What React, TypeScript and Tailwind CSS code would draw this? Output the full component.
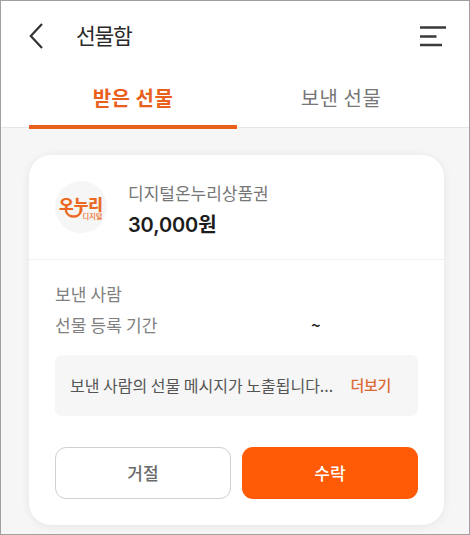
import * as React from "react";

function BrandMark() {
  return (
    <svg className="size-[52px] shrink-0" viewBox="0 0 52 52" fill="none" aria-label="디지털 온누리">
      <circle cx="26" cy="26" r="26" fill="#f6f6f6" />
      <g fill="#ea6a24" fontFamily="'Noto Sans CJK KR', sans-serif">
        <text
          fontSize="15"
          fontWeight="900"
          textLength="44"
          lengthAdjust="spacingAndGlyphs"
          transform="translate(4 28.500)"
        >
          오누리
        </text>
        <text x="27.500" y="37.500" fontSize="7" fontWeight="500" textLength="20" lengthAdjust="spacingAndGlyphs">
          디지털
        </text>
      </g>
      {/* Smile under the wordmark, ends in the stem of the second syllable */}
      <path d="M11 30c2 7.500 14.500 8 15.200-2" stroke="#ea6a24" strokeWidth="2.5" strokeLinecap="round" />
    </svg>
  );
}

function Header() {
  return (
    <header className="flex h-[70px] items-center pl-[28px] pr-[22px]">
      <button type="button" aria-label="뒤로">
        <svg className="block h-[26px] w-[14px]" viewBox="0 0 14 26" fill="none" stroke="#333" strokeWidth="2.2">
          <path d="M13 1 1.8 13 13 25" />
        </svg>
      </button>
      <h1 className="-mt-0.5 ml-[33px] text-[21.500px] leading-8 tracking-[-1.3px] text-[#2a2a2a]">선물함</h1>
      <button type="button" aria-label="메뉴" className="ml-auto">
        <svg className="block h-[22px] w-[28px]" viewBox="0 0 28 22" stroke="#3a3a3a" strokeWidth="2.3">
          <path d="M1 2.5h26M1 11.5h16.500M1 20h22" />
        </svg>
      </button>
    </header>
  );
}

export default function App() {
  return (
    <div className="flex h-[535px] w-[470px] flex-col overflow-hidden border border-[#a0a0a0] bg-[#f6f6f6] font-['Noto_Sans_CJK_KR',sans-serif]">
      <div className="h-[127px] shrink-0 border-b border-[#e6e6e6] bg-white">
        <Header />

        {/* Tabs */}
        <div className="grid h-[58px] grid-cols-[208px_208px] pl-[28px] text-center text-[20px] leading-[54px] tracking-[0.5px]">
          <button type="button" className="border-b-4 border-[#e8601c] font-bold text-[#e8601c]">
            받은 선물
          </button>
          <button type="button" className="border-b-4 border-transparent text-[#777]">
            보낸 선물
          </button>
        </div>
      </div>

      {/* Gift card */}
      <div className="ml-[28px] mt-[27px] flex h-[370px] w-[415px] shrink-0 flex-col rounded-[22px] bg-white shadow-[0_1px_10px_rgba(0,0,0,0.07)]">
        <div className="flex h-[105px] items-center gap-[21px] border-b border-[#f1f1f1] px-[26px]">
          <BrandMark />
          <div className="pt-[5px]">
            <p className="text-[17px] leading-[30px] text-[#777]">디지털온누리상품권</p>
            <p className="font-[Inter,'Noto_Sans_CJK_KR',sans-serif] text-[20px] font-semibold leading-[34px] tracking-[-0.1px] text-[#1c1c1c]">
              30,000원
            </p>
          </div>
        </div>

        <div className="px-[26px] pt-[18px]">
          <dl className="text-[17px] leading-[31px] tracking-[0.15px] text-[#808080]">
            <dt>보낸 사람</dt>
            <div className="flex">
              <dt className="w-[256px]">선물 등록 기간</dt>
              <dd className="font-medium text-[#222]">~</dd>
            </div>
          </dl>

          <div className="mt-[15px] flex h-[61px] items-center justify-between rounded-[7px] bg-[#f6f6f6] pb-px pl-[15px] pr-[27px]">
            <p className="text-[16px] text-[#555]">보낸 사람의 선물 메시지가 노출됩니다...</p>
            <button type="button" className="text-[15px] font-medium tracking-[-0.3px] text-[#dc6936]">
              더보기
            </button>
          </div>

          <div className="mt-[31px] flex gap-[11px] text-[17px] font-medium">
            <button type="button" className="h-[52px] w-[176px] rounded-[11px] border-[1.5px] border-[#d0d0d0] text-[#6a6a6a]">
              거절
            </button>
            <button type="button" className="h-[52px] w-[176px] rounded-[11px] bg-[#ff5a05] text-white">
              수락
            </button>
          </div>
        </div>
      </div>
    </div>
  );
}
